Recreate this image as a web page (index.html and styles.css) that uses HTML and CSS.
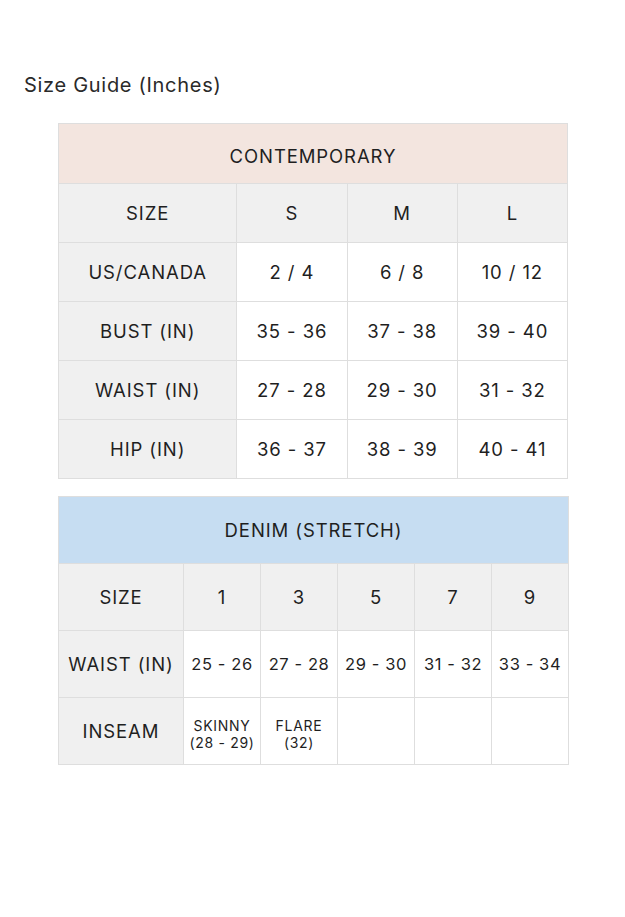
FILE: index.html
```html
<!DOCTYPE html>
<html>
<head>
<meta charset="utf-8">
<link rel="stylesheet" href="styles.css">
</head>
<body>
<main class="page">
  <h1 class="title">Size Guide (Inches)</h1>
  <table class="chart chart-contemporary">
    <colgroup>
      <col class="c-label-wide"><col class="c-val"><col class="c-val"><col class="c-val">
    </colgroup>
    <tr><th colspan="4" class="head head-pink">CONTEMPORARY</th></tr>
    <tr class="grey"><td class="label">SIZE</td><td>S</td><td>M</td><td>L</td></tr>
    <tr><td class="label">US/CANADA</td><td>2 / 4</td><td>6 / 8</td><td>10 / 12</td></tr>
    <tr><td class="label">BUST (IN)</td><td>35 - 36</td><td>37 - 38</td><td>39 - 40</td></tr>
    <tr><td class="label">WAIST (IN)</td><td>27 - 28</td><td>29 - 30</td><td>31 - 32</td></tr>
    <tr><td class="label">HIP (IN)</td><td>36 - 37</td><td>38 - 39</td><td>40 - 41</td></tr>
  </table>
  <table class="chart chart-denim">
    <colgroup>
      <col class="c-label"><col class="c-sm"><col class="c-sm"><col class="c-sm"><col class="c-sm"><col class="c-sm">
    </colgroup>
    <tr><th colspan="6" class="head head-blue">DENIM (STRETCH)</th></tr>
    <tr class="grey"><td class="label">SIZE</td><td>1</td><td>3</td><td>5</td><td>7</td><td>9</td></tr>
    <tr><td class="label">WAIST (IN)</td><td class="tight">25 - 26</td><td class="tight">27 - 28</td><td class="tight">29 - 30</td><td class="tight">31 - 32</td><td class="tight">33 - 34</td></tr>
    <tr><td class="label">INSEAM</td><td class="small">SKINNY<br>(28 - 29)</td><td class="small">FLARE<br>(32)</td><td></td><td></td><td></td></tr>
  </table>
</main>
</body>
</html>
```
FILE: styles.css
```css
html, body {
  margin: 0;
  padding: 0;
  background: #fff;
}
body {
  font-family: "Inter", "Open Sans", sans-serif;
  color: #222;
}
.page {
  padding: 73px 0 0 0;
}
.title {
  margin: 0 0 26px 24px;
  font-size: 20px;
  font-weight: 400;
  line-height: 24px;
  letter-spacing: 0.7px;
  color: #2a2a2a;
}
.chart {
  margin-left: 58px;
  width: 510px;
  border-collapse: collapse;
  table-layout: fixed;
  margin-bottom: 17px;
}
.chart td, .chart th {
  border: 1px solid #dedede;
  text-align: center;
  vertical-align: middle;
  padding: 0;
  font-size: 18.5px;
  letter-spacing: 0.9px;
  font-weight: 400;
  color: #1f1f1f;
}
.c-label-wide { width: 178px; }
.c-val { width: 110px; }
.c-label { width: 125px; }
.c-sm { width: 77px; }
.head { font-weight: 400; }
.head-pink { background: #f3e5df; }
.head-blue { background: #c6ddf2; }
.chart-contemporary th { height: 54px; padding-top: 5px; }
.chart-contemporary td { height: 58px; }
.chart-denim th { height: 66px; }
.chart-denim td { height: 66px; }
.grey td { background: #f0f0f0; }
.label { background: #f0f0f0; }
.chart td.tight { font-size: 16.5px; letter-spacing: 0.6px; }
.chart td.small { font-size: 14px; line-height: 17px; letter-spacing: 0.7px; height: 60px; padding-top: 6px; }
```
